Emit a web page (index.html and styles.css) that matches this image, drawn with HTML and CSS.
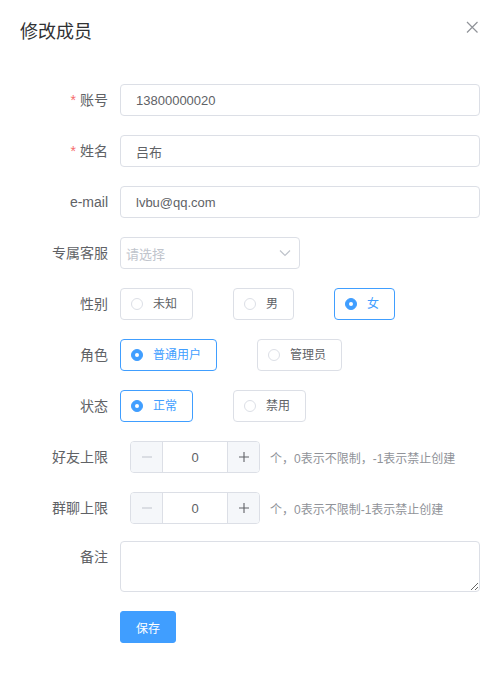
FILE: index.html
```html
<!DOCTYPE html>
<html lang="zh-CN">
<head>
    <meta charset="UTF-8">
    <meta name="viewport" content="width=device-width, initial-scale=1.0">
    <title>修改成员</title>
    <link rel="stylesheet" href="styles.css">
</head>
<body>
    <div class="dialog">
        <div class="dialog-header">
            <span class="dialog-title">修改成员</span>
            <button class="dialog-close" type="button">
                <svg viewBox="0 0 16 16" width="16" height="16">
                    <path d="M3 2L13.5 12.5M13.5 2L3 12.5" stroke="#909399" stroke-width="1.2" fill="none"/>
                </svg>
            </button>
        </div>

        <div class="dialog-body">
            <form class="form">
                <div class="form-item">
                    <label class="form-label is-required">账号</label>
                    <div class="form-content">
                        <input class="input" type="text" value="13800000020">
                    </div>
                </div>

                <div class="form-item">
                    <label class="form-label is-required">姓名</label>
                    <div class="form-content">
                        <input class="input" type="text" value="吕布">
                    </div>
                </div>

                <div class="form-item">
                    <label class="form-label">e-mail</label>
                    <div class="form-content">
                        <input class="input" type="text" value="lvbu@qq.com">
                    </div>
                </div>

                <div class="form-item">
                    <label class="form-label">专属客服</label>
                    <div class="form-content">
                        <div class="select">
                            <span class="select-placeholder">请选择</span>
                            <svg class="select-arrow" viewBox="0 0 12 8" width="12" height="8">
                                <path d="M1 1.5L6 6.5L11 1.5" stroke="#c0c4cc" stroke-width="1.2" fill="none"/>
                            </svg>
                        </div>
                    </div>
                </div>

                <div class="form-item">
                    <label class="form-label">性别</label>
                    <div class="form-content radio-group">
                        <label class="radio"><span class="radio-dot"></span><span class="radio-label">未知</span></label>
                        <label class="radio"><span class="radio-dot"></span><span class="radio-label">男</span></label>
                        <label class="radio is-checked"><span class="radio-dot"></span><span class="radio-label">女</span></label>
                    </div>
                </div>

                <div class="form-item">
                    <label class="form-label">角色</label>
                    <div class="form-content radio-group">
                        <label class="radio is-checked"><span class="radio-dot"></span><span class="radio-label">普通用户</span></label>
                        <label class="radio"><span class="radio-dot"></span><span class="radio-label">管理员</span></label>
                    </div>
                </div>

                <div class="form-item">
                    <label class="form-label">状态</label>
                    <div class="form-content radio-group">
                        <label class="radio is-checked"><span class="radio-dot"></span><span class="radio-label">正常</span></label>
                        <label class="radio"><span class="radio-dot"></span><span class="radio-label">禁用</span></label>
                    </div>
                </div>

                <div class="form-item">
                    <label class="form-label">好友上限</label>
                    <div class="form-content">
                        <div class="number-input">
                            <span class="number-btn is-disabled">
                                <svg viewBox="0 0 12 12" width="12" height="12"><path d="M1 6H11" stroke="currentColor" stroke-width="1.1"/></svg>
                            </span>
                            <input class="number-value" type="text" value="0">
                            <span class="number-btn">
                                <svg viewBox="0 0 12 12" width="12" height="12"><path d="M1 6H11M6 1V11" stroke="currentColor" stroke-width="1.1"/></svg>
                            </span>
                        </div>
                        <span class="form-tip">个，0表示不限制，-1表示禁止创建</span>
                    </div>
                </div>

                <div class="form-item">
                    <label class="form-label">群聊上限</label>
                    <div class="form-content">
                        <div class="number-input">
                            <span class="number-btn is-disabled">
                                <svg viewBox="0 0 12 12" width="12" height="12"><path d="M1 6H11" stroke="currentColor" stroke-width="1.1"/></svg>
                            </span>
                            <input class="number-value" type="text" value="0">
                            <span class="number-btn">
                                <svg viewBox="0 0 12 12" width="12" height="12"><path d="M1 6H11M6 1V11" stroke="currentColor" stroke-width="1.1"/></svg>
                            </span>
                        </div>
                        <span class="form-tip">个，0表示不限制-1表示禁止创建</span>
                    </div>
                </div>

                <div class="form-item form-item-note">
                    <label class="form-label">备注</label>
                    <div class="form-content">
                        <textarea class="textarea" rows="2"></textarea>
                    </div>
                </div>

                <div class="form-item">
                    <div class="form-content form-actions">
                        <button class="btn-primary" type="button">保存</button>
                    </div>
                </div>
            </form>
        </div>
    </div>
</body>
</html>
```

FILE: styles.css
```css
/* dasar halaman */
* {
    box-sizing: border-box;
}

body {
    margin: 0;
    background: #fff;
    font-family: "Liberation Sans", "Noto Sans CJK SC", sans-serif;
    color: #606266;
}

/* dialog */
.dialog {
    background: #fff;
}

.dialog-header {
    display: flex;
    justify-content: space-between;
    align-items: flex-start;
    padding: 20px 20px 10px;
}

.dialog-title {
    font-size: 18px;
    line-height: 24px;
    color: #303133;
}

.dialog-close {
    border: none;
    background: none;
    padding: 0;
    width: 16px;
    height: 16px;
    cursor: pointer;
}

.dialog-close svg {
    display: block;
}

.dialog-body {
    padding: 30px 20px;
}

/* form */
.form-item {
    display: flex;
    margin-bottom: 19px;
}

.form-item:last-child {
    margin-bottom: 0;
}

.form-item-note {
    margin-top: -2px;
}

.form-label {
    width: 100px;
    flex-shrink: 0;
    padding-right: 12px;
    text-align: right;
    font-size: 14px;
    line-height: 32px;
    color: #606266;
}

.form-label.is-required::before {
    content: "*";
    color: #f56c6c;
    margin-right: 4px;
}

.form-content {
    flex: 1;
    display: flex;
    align-items: center;
    min-height: 32px;
}

.form-actions {
    margin-left: 100px;
}

.form-tip {
    margin-left: 10px;
    font-size: 12px;
    color: #909399;
}

/* input */
.input {
    width: 100%;
    height: 32px;
    padding: 0 15px;
    border: 1px solid #dcdfe6;
    border-radius: 4px;
    font-family: inherit;
    font-size: 13px;
    color: #606266;
    outline: none;
}

.textarea {
    display: block;
    width: 100%;
    height: 51px;
    padding: 5px 15px;
    border: 1px solid #dcdfe6;
    border-radius: 4px;
    font-family: inherit;
    font-size: 13px;
    line-height: 1.5;
    color: #606266;
    resize: vertical;
    outline: none;
}

/* select */
.select {
    width: 180px;
    height: 32px;
    display: flex;
    align-items: center;
    justify-content: space-between;
    padding: 0 8px 0 5px;
    border: 1px solid #dcdfe6;
    border-radius: 4px;
}

.select-placeholder {
    font-size: 13px;
    color: #c0c4cc;
}

.select-arrow {
    display: block;
}

/* radio */
.radio-group {
    gap: 40px;
}

.radio {
    display: inline-flex;
    align-items: center;
    height: 32px;
    padding: 0 15px 0 10px;
    border: 1px solid #dcdfe6;
    border-radius: 4px;
    cursor: pointer;
}

.radio-dot {
    width: 12px;
    height: 12px;
    border: 1px solid #dcdfe6;
    border-radius: 50%;
    background: #fff;
    display: flex;
    align-items: center;
    justify-content: center;
}

.radio-label {
    padding-left: 10px;
    font-size: 12px;
    line-height: 1;
    color: #606266;
}

.radio.is-checked {
    border-color: #409eff;
}

.radio.is-checked .radio-dot {
    border-color: #409eff;
    background: #409eff;
}

.radio.is-checked .radio-dot::after {
    content: "";
    width: 4px;
    height: 4px;
    border-radius: 50%;
    background: #fff;
}

.radio.is-checked .radio-label {
    color: #409eff;
}

/* input angka */
.number-input {
    display: flex;
    width: 130px;
    height: 32px;
    margin-left: 10px;
    border: 1px solid #dcdfe6;
    border-radius: 4px;
    overflow: hidden;
    flex-shrink: 0;
}

.number-btn {
    width: 32px;
    display: flex;
    align-items: center;
    justify-content: center;
    background: #f5f7fa;
    color: #606266;
}

.number-btn:first-child {
    border-right: 1px solid #dcdfe6;
}

.number-btn:last-child {
    border-left: 1px solid #dcdfe6;
}

.number-btn.is-disabled {
    color: #c0c4cc;
}

.number-value {
    flex: 1;
    min-width: 0;
    border: none;
    text-align: center;
    font-family: inherit;
    font-size: 13px;
    color: #606266;
    outline: none;
}

/* tombol */
.btn-primary {
    height: 32px;
    padding: 0 15px;
    border: 1px solid #409eff;
    border-radius: 3px;
    background: #409eff;
    color: #fff;
    font-family: inherit;
    font-size: 12px;
    cursor: pointer;
}
```
